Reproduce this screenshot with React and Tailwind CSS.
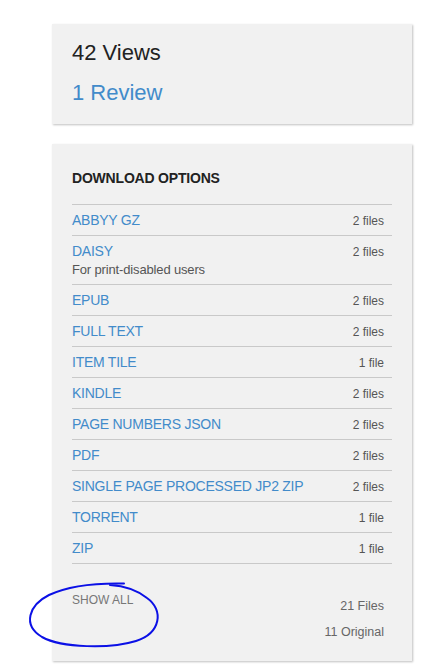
import React from 'react';

// Download options data
const options = [
  { name: 'ABBYY GZ', count: '2 files' },
  { name: 'DAISY', count: '2 files', note: 'For print-disabled users' },
  { name: 'EPUB', count: '2 files' },
  { name: 'FULL TEXT', count: '2 files' },
  { name: 'ITEM TILE', count: '1 file' },
  { name: 'KINDLE', count: '2 files' },
  { name: 'PAGE NUMBERS JSON', count: '2 files' },
  { name: 'PDF', count: '2 files' },
  { name: 'SINGLE PAGE PROCESSED JP2 ZIP', count: '2 files' },
  { name: 'TORRENT', count: '1 file' },
  { name: 'ZIP', count: '1 file' },
];

const Card = ({ className = '', children }) => (
  <div className={`ml-[52px] w-[360px] bg-[#f1f1f1] shadow-[1px_1px_2px_rgba(0,0,0,0.25)] ${className}`}>
    {children}
  </div>
);

const OptionRow = ({ name, count, note }) => (
  <div className="flex justify-between items-start border-t border-[#c9c9c9] pt-[5px] pb-[5px] pr-[8px]">
    <div>
      <div className="text-[14px] leading-[20px] tracking-[-0.25px] text-[#428bca]">{name}</div>
      {note && <div className="text-[13px] leading-[18px] tracking-[-0.15px] text-[#555]">{note}</div>}
    </div>
    <div className="text-[12px] leading-[18px] mt-[2px] text-[#555]">{count}</div>
  </div>
);

export default function App() {
  return (
    <div className="relative w-[424px] min-h-[670px] bg-white pt-[24px] font-['Liberation_Sans',Arial,sans-serif]">
      {/* Stats card */}
      <Card className="pl-[20px] pt-[15px] pb-[17px]">
        <div className="text-[22px] leading-[28px] text-[#222]">42 Views</div>
        <div className="text-[22px] leading-[28px] mt-[12px] text-[#428bca]">1 Review</div>
      </Card>

      {/* Download options */}
      <Card className="mt-[20px] pl-[20px] pr-[20px] pt-[26px] pb-[20px]">
        <h5 className="text-[14px] leading-[17px] tracking-[-0.2px] font-bold text-[#222] mb-[17px]">DOWNLOAD OPTIONS</h5>
        <div className="border-b border-[#c9c9c9]">
          {options.map((o) => (
            <OptionRow key={o.name} {...o} />
          ))}
        </div>
        <div className="flex justify-between pr-[8px]">
          <div className="mt-[28px] text-[12px] leading-[17px] text-[#777]">SHOW ALL</div>
          <div className="pt-[34px] text-right text-[12.5px] leading-[17px] text-[#666]">
            <div>21 Files</div>
            <div className="mt-[9px]">11 Original</div>
          </div>
        </div>
      </Card>

      {/* hand-drawn annotation */}
      <svg className="absolute left-0 top-0 pointer-events-none" width="424" height="670">
        <path
          d="M124 583.5 C100 583 70 585 49 595 C29 605 22 625 42 637 C62 648 110 649 136 641 C161 633 164 610 147 598 C137 590 126 586 110 585"
          fill="none"
          stroke="#0b10e6"
          strokeWidth="2"
          strokeLinecap="round"
        />
      </svg>
    </div>
  );
}
